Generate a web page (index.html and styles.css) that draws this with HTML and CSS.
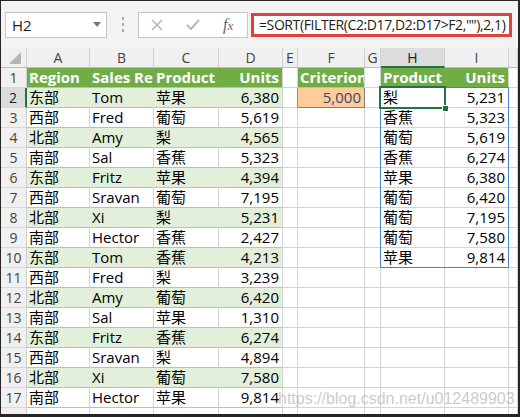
FILE: index.html
```html
<!DOCTYPE html>
<html>
<head>
<meta charset="utf-8">
<link rel="stylesheet" href="styles.css">
</head>
<body>
<div class="frame">
  <div class="toolbar">
    <div class="namebox"><span>H2</span><span class="nb-arrow"></span></div>
    <div class="sep"><i></i><i></i><i></i></div>
    <div class="btns">
      <svg class="ic-x" width="12" height="12" viewBox="0 0 12 12"><path d="M1 1L11 11M11 1L1 11" stroke="#b9b9b9" stroke-width="1.6" fill="none"/></svg>
      <svg class="ic-ok" width="14" height="11" viewBox="0 0 14 11"><path d="M1 6L5 10L13 1" stroke="#b9b9b9" stroke-width="2" fill="none"/></svg>
      <span class="fx">f<span class="fx-x">x</span></span>
    </div>
    <div class="formula">=SORT(FILTER(C2:D17,D2:D17&gt;F2,&quot;&quot;),2,1)</div>
  </div>
  <div class="sheet">
    <div class="r hdr"><div class="corner"><svg width="12" height="12" viewBox="0 0 12 12"><path d="M12 0L12 12L0 12Z" fill="#b4b4b4"/></svg></div><div>A</div><div>B</div><div>C</div><div>D</div><div>E</div><div>F</div><div>G</div><div class="hact">H</div><div>I</div><div></div></div>
    <div class="r"><div class="rh">1</div><div class="g">Region</div><div class="g">Sales Rep</div><div class="g">Product</div><div class="g e n">Units</div><div></div><div class="g e">Criterion</div><div></div><div class="g">Product</div><div class="g e n">Units</div><div></div></div>
    <div class="r"><div class="rh ract">2</div><div class="b">东部</div><div class="b">Tom</div><div class="b">苹果</div><div class="b e n">6,380</div><div class="el"></div><div class="inp n">5,000</div><div></div><div>梨</div><div class="n">5,231</div><div></div></div>
    <div class="r"><div class="rh">3</div><div class="t">西部</div><div class="t">Fred</div><div class="t">葡萄</div><div class="t n">5,619</div><div></div><div></div><div></div><div>香蕉</div><div class="n">5,323</div><div></div></div>
    <div class="r"><div class="rh">4</div><div class="b">北部</div><div class="b">Amy</div><div class="b">梨</div><div class="b e n">4,565</div><div></div><div></div><div></div><div>葡萄</div><div class="n">5,619</div><div></div></div>
    <div class="r"><div class="rh">5</div><div class="t">南部</div><div class="t">Sal</div><div class="t">香蕉</div><div class="t n">5,323</div><div></div><div></div><div></div><div>香蕉</div><div class="n">6,274</div><div></div></div>
    <div class="r"><div class="rh">6</div><div class="b">东部</div><div class="b">Fritz</div><div class="b">苹果</div><div class="b e n">4,394</div><div></div><div></div><div></div><div>苹果</div><div class="n">6,380</div><div></div></div>
    <div class="r"><div class="rh">7</div><div class="t">西部</div><div class="t">Sravan</div><div class="t">葡萄</div><div class="t n">7,195</div><div></div><div></div><div></div><div>葡萄</div><div class="n">6,420</div><div></div></div>
    <div class="r"><div class="rh">8</div><div class="b">北部</div><div class="b">Xi</div><div class="b">梨</div><div class="b e n">5,231</div><div></div><div></div><div></div><div>葡萄</div><div class="n">7,195</div><div></div></div>
    <div class="r"><div class="rh">9</div><div class="t">南部</div><div class="t">Hector</div><div class="t">香蕉</div><div class="t n">2,427</div><div></div><div></div><div></div><div>葡萄</div><div class="n">7,580</div><div></div></div>
    <div class="r"><div class="rh">10</div><div class="b">东部</div><div class="b">Tom</div><div class="b">香蕉</div><div class="b e n">4,213</div><div></div><div></div><div></div><div>苹果</div><div class="n">9,814</div><div></div></div>
    <div class="r"><div class="rh">11</div><div class="t">西部</div><div class="t">Fred</div><div class="t">梨</div><div class="t n">3,239</div><div></div><div></div><div></div><div></div><div></div><div></div></div>
    <div class="r"><div class="rh">12</div><div class="b">北部</div><div class="b">Amy</div><div class="b">葡萄</div><div class="b e n">6,420</div><div></div><div></div><div></div><div></div><div></div><div></div></div>
    <div class="r"><div class="rh">13</div><div class="t">南部</div><div class="t">Sal</div><div class="t">苹果</div><div class="t n">1,310</div><div></div><div></div><div></div><div></div><div></div><div></div></div>
    <div class="r"><div class="rh">14</div><div class="b">东部</div><div class="b">Fritz</div><div class="b">香蕉</div><div class="b e n">6,274</div><div></div><div></div><div></div><div></div><div></div><div></div></div>
    <div class="r"><div class="rh">15</div><div class="t">西部</div><div class="t">Sravan</div><div class="t">梨</div><div class="t n">4,894</div><div></div><div></div><div></div><div></div><div></div><div></div></div>
    <div class="r"><div class="rh">16</div><div class="b">北部</div><div class="b">Xi</div><div class="b">葡萄</div><div class="b e n">7,580</div><div></div><div></div><div></div><div></div><div></div><div></div></div>
    <div class="r"><div class="rh">17</div><div class="t">南部</div><div class="t">Hector</div><div class="t">苹果</div><div class="t n">9,814</div><div></div><div></div><div></div><div></div><div></div><div></div></div>
    <div class="r"><div class="rh"></div><div></div><div></div><div></div><div></div><div></div><div></div><div></div><div></div><div></div><div></div></div>
    <div class="spill"></div>
    <div class="active"></div>
    <div class="handle"></div>
    <div class="wm">https://blog.csdn.net/u012489903</div>
  </div>
</div>
</body>
</html>
```

FILE: styles.css
```css
* { box-sizing: border-box; }
body {
  margin: 0;
  font-family: "Open Sans", "Noto Sans CJK SC", sans-serif;
}
.frame {
  width: 520px;
  height: 417px;
  border: 1px solid #262626;
  border-right-width: 2px;
  border-bottom-width: 3px;
  overflow: hidden;
  background: #fff;
}
.toolbar {
  height: 47px;
  background: #f3f3f3;
  display: flex;
  align-items: center;
  padding-left: 4px;
}
.namebox {
  width: 102px;
  height: 26px;
  background: #fff;
  border: 1px solid #c6c6c6;
  display: flex;
  align-items: center;
  justify-content: space-between;
  padding: 0 5px 0 6px;
  font-size: 15px;
  color: #222;
}
.nb-arrow {
  width: 0;
  height: 0;
  border-left: 4px solid transparent;
  border-right: 4px solid transparent;
  border-top: 5px solid #777;
}
.sep {
  width: 31px;
  display: flex;
  flex-direction: column;
  align-items: center;
  gap: 3px;
}
.sep i {
  display: block;
  width: 2px;
  height: 3px;
  background: #aaa;
}
.btns {
  width: 110px;
  height: 26px;
  background: #fff;
  border: 1px solid #c6c6c6;
  display: flex;
  align-items: center;
}
.ic-x { margin-left: 12px; }
.ic-ok { margin-left: 23px; }
.fx {
  margin-left: 23px;
  font-family: "Liberation Serif", serif;
  font-style: italic;
  font-size: 16px;
  color: #666;
  line-height: 1;
}
.fx-x { font-size: 13px; }
.formula {
  margin-left: 3px;
  width: 261px;
  height: 24px;
  border: 3px solid #e0413a;
  background: #fff;
  padding-left: 5px;
  font-size: 14px;
  letter-spacing: -0.4px;
  line-height: 17px;
  white-space: nowrap;
  overflow: hidden;
  color: #222;
}
.sheet {
  position: relative;
  height: 366px;
  overflow: hidden;
}
.r {
  display: grid;
  grid-template-columns: 26px 63px 64px 65px 64px 15px 67px 16px 64px 64px 1fr;
  height: 20px;
}
.r > div {
  border-right: 1px solid #d4d4d4;
  border-bottom: 1px solid #d4d4d4;
  line-height: 19px;
  font-size: 15px;
  padding: 0 2px;
  white-space: nowrap;
  overflow: hidden;
  color: #000;
}
.hdr > div {
  background: #f0f0f0;
  text-align: center;
  font-size: 14px;
  color: #444;
  border-right-color: #cfcfcf;
  border-bottom-color: #bdbdbd;
}
.hdr > .corner {
  padding: 4px 0 0 8px;
  text-align: left;
}
.corner svg { display: block; }
.hdr > .hact {
  background: #dcdcdc;
  border-bottom: 2px solid #217346;
  color: #222;
}
.r > .rh {
  background: #f0f0f0;
  text-align: center;
  font-size: 14px;
  color: #444;
  padding: 0;
  border-right-color: #cfcfcf;
  border-bottom-color: #d8d8d8;
}
.r > .ract {
  background: #dcdcdc;
  border-right: 2px solid #217346;
  color: #222;
}
.r > .g {
  background: #70ad47;
  color: #fff;
  font-weight: 700;
  border-right-color: #70ad47;
  border-bottom-color: #a9d08e;
}
.r > .b {
  background: #e2efda;
  border-right-color: #e2efda;
  border-bottom-color: #a9d08e;
}
.r > .t {
  border-bottom-color: #a9d08e;
}
.r > .e { border-right-color: #d4d4d4; }
.r > .n {
  text-align: right;
  padding-right: 3px;
}
.r > .el { border-right-color: #8f8f8f; }
.r > .inp {
  background: #ffcc99;
  color: #3f3f76;
  border-right-color: #7f7f7f;
  border-bottom-color: #7f7f7f;
}
.spill {
  position: absolute;
  left: 379px;
  top: 39px;
  width: 129px;
  height: 181px;
  border: 1px solid #4a7fd0;
}
.active {
  position: absolute;
  left: 378px;
  top: 38px;
  width: 67px;
  height: 23px;
  border: 2px solid #217346;
}
.handle {
  position: absolute;
  left: 441px;
  top: 57px;
  width: 7px;
  height: 7px;
  background: #217346;
  border: 1px solid #fff;
}
.wm {
  position: absolute;
  left: 277px;
  top: 343px;
  font-family: "Liberation Sans", sans-serif;
  font-size: 16px;
  line-height: 16px;
  color: rgba(150, 150, 150, 0.5);
  white-space: nowrap;
}
```
